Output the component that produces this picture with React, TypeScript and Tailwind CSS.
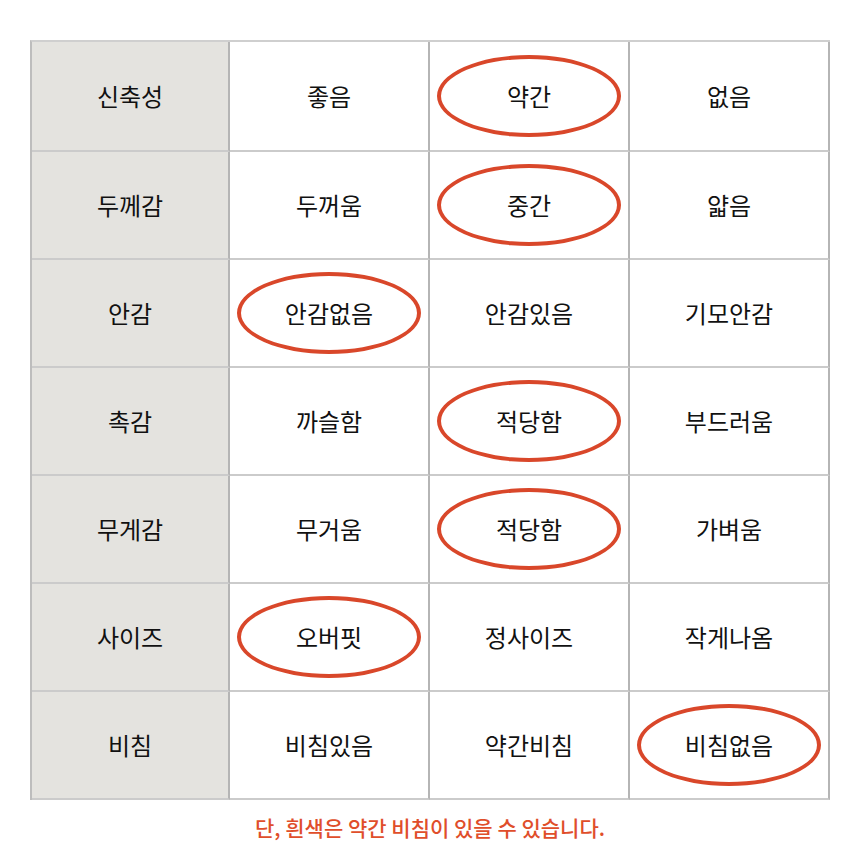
const rows: { label: string; opts: string[]; pick: number }[] = [
  { label: "신축성", opts: ["좋음", "약간", "없음"], pick: 1 },
  { label: "두께감", opts: ["두꺼움", "중간", "얇음"], pick: 1 },
  { label: "안감", opts: ["안감없음", "안감있음", "기모안감"], pick: 0 },
  { label: "촉감", opts: ["까슬함", "적당함", "부드러움"], pick: 1 },
  { label: "무게감", opts: ["무거움", "적당함", "가벼움"], pick: 1 },
  { label: "사이즈", opts: ["오버핏", "정사이즈", "작게나옴"], pick: 0 },
  { label: "비침", opts: ["비침있음", "약간비침", "비침없음"], pick: 2 },
];

const font = { fontFamily: '"Noto Sans CJK KR", "Noto Sans", sans-serif' };

export default function App() {
  return (
    <div className="w-[860px] h-[860px] bg-white pt-[40px] px-[30px]" style={font}>
      <div className="w-[800px] border-t-2 border-l-2 border-t-[#cfcfcf] border-l-[#bdbdbd]">
        {rows.map((r, i) => (
          <div
            key={r.label}
            className={`grid grid-cols-[198px_200px_200px_200px] ${i === 0 ? "h-[110px]" : "h-[108px]"}`}
          >
            <div className="flex items-center justify-center bg-[#e4e3df] border-r-2 border-b-2 border-r-[#b5b5b5] border-b-[#cbcbcb] text-[24px] text-[#111111]">
              {r.label}
            </div>
            {r.opts.map((o, j) => (
              <div
                key={o}
                className="relative flex items-center justify-center border-r-2 border-b-2 border-r-[#b5b5b5] border-b-[#cbcbcb] text-[24px] text-[#111111]"
              >
                {j === r.pick && (
                  <div className="absolute left-1/2 top-1/2 w-[184px] h-[82px] -translate-x-1/2 -translate-y-1/2 rounded-[50%] border-4 border-[#d9472a]" />
                )}
                <span className="relative">{o}</span>
              </div>
            ))}
          </div>
        ))}
      </div>
      <p className="mt-[12px] text-center text-[21px] font-medium text-[#e04e2b]">
        단, 흰색은 약간 비침이 있을 수 있습니다.
      </p>
    </div>
  );
}
